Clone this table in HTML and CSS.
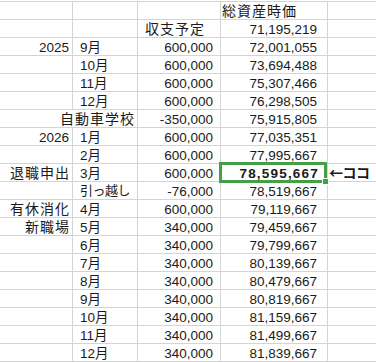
FILE: index.html
```html
<!DOCTYPE html>
<html lang="ja">
<head>
<meta charset="utf-8">
<title>総資産時価</title>
<link rel="stylesheet" href="styles.css">
</head>
<body>
<div class="sheet">
  <div class="c"></div><div class="c"></div><div class="c"></div><div class="c jp head">総資産時価</div><div class="c e"></div>
  <div class="c"></div><div class="c"></div><div class="c jp plan">収支予定</div><div class="c n d">71,195,219</div><div class="c e"></div>

  <div class="c n a">2025</div><div class="c m">9月</div><div class="c n b">600,000</div><div class="c n d">72,001,055</div><div class="c e"></div>
  <div class="c"></div><div class="c m">10月</div><div class="c n b">600,000</div><div class="c n d">73,694,488</div><div class="c e"></div>
  <div class="c"></div><div class="c m">11月</div><div class="c n b">600,000</div><div class="c n d">75,307,466</div><div class="c e"></div>
  <div class="c"></div><div class="c m">12月</div><div class="c n b">600,000</div><div class="c n d">76,298,505</div><div class="c e"></div>
  <div class="c jp span2">自動車学校</div><div class="c n b">-350,000</div><div class="c n d">75,915,805</div><div class="c e"></div>

  <div class="c n a">2026</div><div class="c m">1月</div><div class="c n b">600,000</div><div class="c n d">77,035,351</div><div class="c e"></div>
  <div class="c"></div><div class="c m">2月</div><div class="c n b">600,000</div><div class="c n d">77,995,667</div><div class="c e"></div>
  <div class="c jp a">退職申出</div><div class="c m">3月</div><div class="c n b">600,000</div><div class="c n d bold">78,595,667</div><div class="c e note">←ココ</div>
  <div class="c"></div><div class="c m move">引っ越し</div><div class="c n b">-76,000</div><div class="c n d">78,519,667</div><div class="c e"></div>
  <div class="c jp a">有休消化</div><div class="c m">4月</div><div class="c n b">600,000</div><div class="c n d">79,119,667</div><div class="c e"></div>
  <div class="c jp a">新職場</div><div class="c m">5月</div><div class="c n b">340,000</div><div class="c n d">79,459,667</div><div class="c e"></div>
  <div class="c"></div><div class="c m">6月</div><div class="c n b">340,000</div><div class="c n d">79,799,667</div><div class="c e"></div>
  <div class="c"></div><div class="c m">7月</div><div class="c n b">340,000</div><div class="c n d">80,139,667</div><div class="c e"></div>
  <div class="c"></div><div class="c m">8月</div><div class="c n b">340,000</div><div class="c n d">80,479,667</div><div class="c e"></div>
  <div class="c"></div><div class="c m">9月</div><div class="c n b">340,000</div><div class="c n d">80,819,667</div><div class="c e"></div>
  <div class="c"></div><div class="c m">10月</div><div class="c n b">340,000</div><div class="c n d">81,159,667</div><div class="c e"></div>
  <div class="c"></div><div class="c m">11月</div><div class="c n b">340,000</div><div class="c n d">81,499,667</div><div class="c e"></div>
  <div class="c"></div><div class="c m">12月</div><div class="c n b">340,000</div><div class="c n d">81,839,667</div><div class="c e"></div>

  <div class="selection"><span class="handle"></span></div>
</div>
</body>
</html>
```

FILE: styles.css
```css
html, body {
  margin: 0;
  padding: 0;
  background: #ffffff;
}

body {
  font-family: "Liberation Sans", "Noto Sans CJK JP", sans-serif;
  color: #1a1a1a;
  overflow: hidden;
}

.sheet {
  position: relative;
  margin-top: 1px;
  border-top: 1px solid #d4d4d4;
  display: grid;
  grid-template-columns: 73px 65px 83px 107px 1fr;
  grid-auto-rows: 18px;
  width: 376px;
}

.c {
  box-sizing: border-box;
  border-right: 1px solid #d4d4d4;
  border-bottom: 1px solid #d4d4d4;
  display: flex;
  align-items: flex-end;
  white-space: nowrap;
  overflow: visible;
  font-size: 13.5px;
  line-height: 13px;
  padding-bottom: 1px;
}

.e {
  border-right: none;
}

.n {
  justify-content: flex-end;
}

.jp {
  font-family: "Noto Sans CJK JP", sans-serif;
  font-size: 14px;
  letter-spacing: 1px;
  line-height: 14px;
  padding-bottom: 2px;
}

.head {
  padding-left: 1px;
}

.plan {
  padding-left: 7px;
}

.a {
  justify-content: flex-end;
  padding-right: 3px;
}

.jp.a {
  padding-right: 2px;
}

.span2 {
  grid-column: span 2;
  justify-content: flex-end;
  padding-right: 2px;
}

.b {
  padding-right: 7px;
}

.d {
  padding-right: 10px;
}

.m {
  padding-left: 7px;
}

.m, .move {
  font-family: "Liberation Sans", "Noto Sans CJK JP", sans-serif;
}

.move {
  font-size: 13px;
  letter-spacing: -0.5px;
  padding-bottom: 2px;
}

.bold {
  font-weight: bold;
  letter-spacing: 1.2px;
  padding-right: 8px;
}

.note {
  font-family: "Noto Sans CJK JP", sans-serif;
  font-weight: bold;
  font-size: 14px;
  line-height: 14px;
  padding-left: 1px;
  padding-bottom: 2px;
  letter-spacing: -0.5px;
}

.selection {
  position: absolute;
  left: 219px;
  top: 160px;
  width: 108px;
  height: 21px;
  box-sizing: border-box;
  border: 3px solid #44a047;
  pointer-events: none;
}

.handle {
  position: absolute;
  right: -5px;
  bottom: -5px;
  width: 5px;
  height: 5px;
  background: #44a047;
  border: 1px solid #ffffff;
}
```
